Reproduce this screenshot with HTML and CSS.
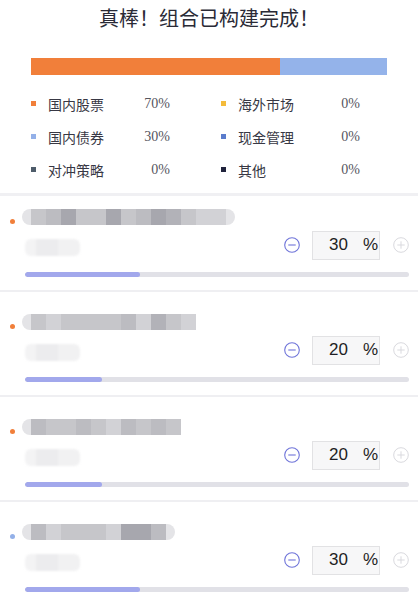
FILE: index.html
```html
<!DOCTYPE html>
<html lang="zh">
<head>
<meta charset="utf-8">
<link rel="stylesheet" href="styles.css">
</head>
<body>
<section class="summary">
  <h1 class="title">真棒！组合已构建完成！</h1>
  <div class="alloc">
    <div class="alloc-seg seg-orange" style="width:70%"></div>
    <div class="alloc-seg seg-blue" style="width:30%"></div>
  </div>
  <div class="legend">
    <div class="leg-item"><span class="sq c-orange"></span><span class="leg-label">国内股票</span><span class="leg-pct">70%</span></div>
    <div class="leg-item"><span class="sq c-yellow"></span><span class="leg-label">海外市场</span><span class="leg-pct">0%</span></div>
    <div class="leg-item"><span class="sq c-lblue"></span><span class="leg-label">国内债券</span><span class="leg-pct">30%</span></div>
    <div class="leg-item"><span class="sq c-blue"></span><span class="leg-label">现金管理</span><span class="leg-pct">0%</span></div>
    <div class="leg-item"><span class="sq c-slate"></span><span class="leg-label">对冲策略</span><span class="leg-pct">0%</span></div>
    <div class="leg-item"><span class="sq c-navy"></span><span class="leg-label">其他</span><span class="leg-pct">0%</span></div>
  </div>
</section>

<section class="funds">
  <div class="card card-first">
    <div class="card-head">
      <span class="dot c-orange"></span>
      <div class="blur-name">
        <span class="px s0"></span><span class="px s2"></span><span class="px s3"></span><span class="px s5"></span><span class="px s2"></span><span class="px s2"></span><span class="px s5"></span><span class="px s2"></span><span class="px s3"></span><span class="px s5"></span><span class="px s4"></span><span class="px s2"></span><span class="px s1"></span><span class="px s1"></span><span class="px s0"></span>
      </div>
    </div>
    <div class="ctrl-row">
      <div class="blur-sub"></div>
      <div class="stepper">
        <svg class="btn" viewBox="0 0 16 16"><circle cx="8" cy="8" r="7.3" fill="none" stroke="#6f74d9" stroke-width="1.1"/><line x1="4.3" y1="8" x2="11.7" y2="8" stroke="#6f74d9" stroke-width="1.1"/></svg>
        <div class="box"><span class="num">30</span><span class="pct">%</span></div>
        <svg class="btn" viewBox="0 0 16 16"><circle cx="8" cy="8" r="7.3" fill="none" stroke="#d9d9de" stroke-width="1"/><line x1="4.3" y1="8" x2="11.7" y2="8" stroke="#d9d9de" stroke-width="1"/><line x1="8" y1="4.3" x2="8" y2="11.7" stroke="#d9d9de" stroke-width="1"/></svg>
      </div>
    </div>
    <div class="track"><div class="fill" style="width:30%"></div></div>
  </div>

  <div class="card">
    <div class="card-head">
      <span class="dot c-orange"></span>
      <div class="blur-name square-end">
        <span class="px s0"></span><span class="px s2"></span><span class="px s1"></span><span class="px s2"></span><span class="px s2"></span><span class="px s2"></span><span class="px s2"></span><span class="px s3"></span><span class="px s1"></span><span class="px s4"></span><span class="px s2"></span><span class="px s1"></span>
      </div>
    </div>
    <div class="ctrl-row">
      <div class="blur-sub"></div>
      <div class="stepper">
        <svg class="btn" viewBox="0 0 16 16"><circle cx="8" cy="8" r="7.3" fill="none" stroke="#6f74d9" stroke-width="1.1"/><line x1="4.3" y1="8" x2="11.7" y2="8" stroke="#6f74d9" stroke-width="1.1"/></svg>
        <div class="box"><span class="num">20</span><span class="pct">%</span></div>
        <svg class="btn" viewBox="0 0 16 16"><circle cx="8" cy="8" r="7.3" fill="none" stroke="#d9d9de" stroke-width="1"/><line x1="4.3" y1="8" x2="11.7" y2="8" stroke="#d9d9de" stroke-width="1"/><line x1="8" y1="4.3" x2="8" y2="11.7" stroke="#d9d9de" stroke-width="1"/></svg>
      </div>
    </div>
    <div class="track"><div class="fill" style="width:20%"></div></div>
  </div>

  <div class="card">
    <div class="card-head">
      <span class="dot c-orange"></span>
      <div class="blur-name square-end">
        <span class="px s0"></span><span class="px s3"></span><span class="px s2"></span><span class="px s2"></span><span class="px s3"></span><span class="px s2"></span><span class="px s1"></span><span class="px s3"></span><span class="px s2"></span><span class="px s3"></span><span class="px s2"></span>
      </div>
    </div>
    <div class="ctrl-row">
      <div class="blur-sub"></div>
      <div class="stepper">
        <svg class="btn" viewBox="0 0 16 16"><circle cx="8" cy="8" r="7.3" fill="none" stroke="#6f74d9" stroke-width="1.1"/><line x1="4.3" y1="8" x2="11.7" y2="8" stroke="#6f74d9" stroke-width="1.1"/></svg>
        <div class="box"><span class="num">20</span><span class="pct">%</span></div>
        <svg class="btn" viewBox="0 0 16 16"><circle cx="8" cy="8" r="7.3" fill="none" stroke="#d9d9de" stroke-width="1"/><line x1="4.3" y1="8" x2="11.7" y2="8" stroke="#d9d9de" stroke-width="1"/><line x1="8" y1="4.3" x2="8" y2="11.7" stroke="#d9d9de" stroke-width="1"/></svg>
      </div>
    </div>
    <div class="track"><div class="fill" style="width:20%"></div></div>
  </div>

  <div class="card">
    <div class="card-head">
      <span class="dot c-lblue"></span>
      <div class="blur-name">
        <span class="px s0"></span><span class="px s3"></span><span class="px s1"></span><span class="px s2"></span><span class="px s2"></span><span class="px s2"></span><span class="px s1"></span><span class="px s5"></span><span class="px s5"></span><span class="px s3"></span><span class="px s0"></span>
      </div>
    </div>
    <div class="ctrl-row">
      <div class="blur-sub"></div>
      <div class="stepper">
        <svg class="btn" viewBox="0 0 16 16"><circle cx="8" cy="8" r="7.3" fill="none" stroke="#6f74d9" stroke-width="1.1"/><line x1="4.3" y1="8" x2="11.7" y2="8" stroke="#6f74d9" stroke-width="1.1"/></svg>
        <div class="box"><span class="num">30</span><span class="pct">%</span></div>
        <svg class="btn" viewBox="0 0 16 16"><circle cx="8" cy="8" r="7.3" fill="none" stroke="#d9d9de" stroke-width="1"/><line x1="4.3" y1="8" x2="11.7" y2="8" stroke="#d9d9de" stroke-width="1"/><line x1="8" y1="4.3" x2="8" y2="11.7" stroke="#d9d9de" stroke-width="1"/></svg>
      </div>
    </div>
    <div class="track"><div class="fill" style="width:30%"></div></div>
  </div>
</section>
</body>
</html>
```
FILE: styles.css
```css
* { box-sizing: border-box; }
html, body { margin: 0; padding: 0; background: #fff; }
body {
  width: 418px;
  overflow: hidden;
  font-family: "Noto Sans CJK SC", "Noto Sans", sans-serif;
  color: #2b2b38;
}

.summary {
  padding: 6px 31px 7px 31px;
  border-bottom: 3px solid #f0f0f3;
}
.title {
  margin: 0;
  font-size: 20px;
  line-height: 24px;
  font-weight: 400;
  text-align: center;
  color: #2a2a36;
}
.alloc {
  display: flex;
  margin-top: 28px;
  height: 17px;
  width: 356px;
}
.alloc-seg { height: 100%; }
.seg-orange { background: #f17f3a; }
.seg-blue { background: #94b3ea; }

.legend {
  margin-top: 12px;
  display: grid;
  grid-template-columns: 190px 1fr;
  grid-auto-rows: 33px;
}
.leg-item {
  width: 139px;
  display: flex;
  align-items: center;
}
.sq { width: 5px; height: 5px; flex: none; }
.leg-label {
  margin-left: 12px;
  font-size: 14px;
  color: #383844;
}
.leg-pct {
  margin-left: auto;
  font-family: "Liberation Serif", serif;
  font-size: 14px;
  color: #55555e;
}
.c-orange { background: #f17f3a; }
.c-yellow { background: #f4bb3a; }
.c-lblue { background: #93b0e8; }
.c-blue { background: #5a7ccc; }
.c-slate { background: #4e5c6a; }
.c-navy { background: #20233c; }

.card {
  padding: 22px 9px 13px 10px;
  border-bottom: 2px solid #efeff2;
}
.card-first { padding-top: 13px; }
.card-head {
  display: flex;
  align-items: flex-start;
  height: 16px;
}
.dot {
  width: 5px;
  height: 5px;
  border-radius: 50%;
  margin-top: 10px;
  flex: none;
}
.blur-name {
  margin-left: 7px;
  height: 16px;
  display: flex;
  border-radius: 8px;
  overflow: hidden;
  filter: blur(0.7px);
}
.blur-name.square-end { border-radius: 8px 0 0 8px; }
.px { width: 15px; height: 100%; flex: none; }
.s0 { background: #e4e4e7; width: 9px; }
.s1 { background: #d2d2d6; }
.s2 { background: #c6c6ca; }
.s3 { background: #bcbcc1; }
.s4 { background: #b2b2b8; }
.s5 { background: #a7a7ae; }

.ctrl-row {
  margin-top: 5px;
  height: 30px;
  display: flex;
  align-items: center;
  justify-content: space-between;
}
.blur-sub {
  margin-left: 15px;
  width: 55px;
  height: 17px;
  margin-top: 4px;
  border-radius: 6px;
  background: linear-gradient(90deg, #f3f3f4 0 20%, #ececee 20% 60%, #f1f1f2 60% 100%);
  filter: blur(0.8px);
}
.stepper {
  display: flex;
  align-items: center;
}
.btn { width: 16px; height: 16px; display: block; }
.box {
  margin: 0 13px 0 12px;
  width: 68px;
  height: 29px;
  border: 1px solid #e2e2e4;
  background: #f7f7f8;
  display: flex;
  align-items: center;
  padding-left: 16px;
  font-family: "Liberation Sans", Arial, sans-serif;
  color: #1e1e24;
}
.num { font-size: 17px; }
.pct { font-size: 17px; margin-left: 15px; }

.track {
  margin: 12px 0 0 15px;
  height: 5px;
  border-radius: 3px;
  background: #e1e1e7;
  overflow: hidden;
}
.fill {
  height: 100%;
  border-radius: 3px;
  background: #a2a8ec;
}
```
